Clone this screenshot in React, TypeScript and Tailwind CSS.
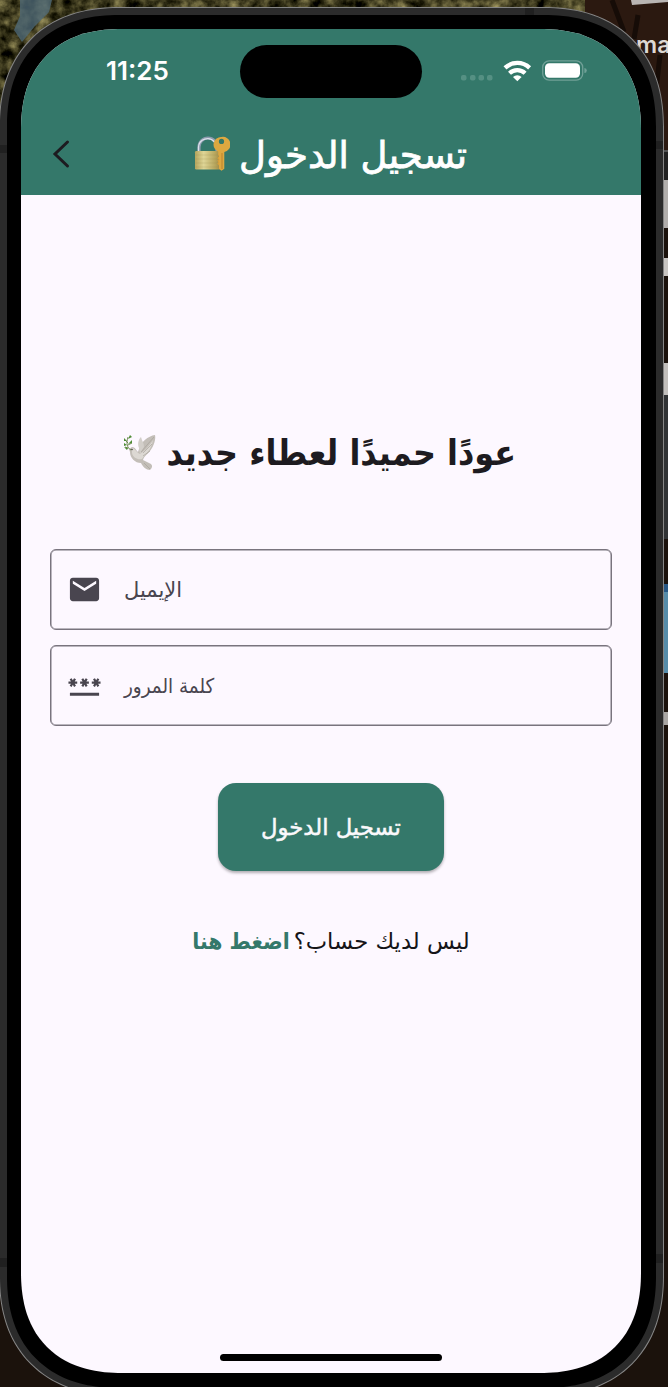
import React from "react";

function LockKeyIcon() {
  return (
    <svg width="36" height="36" viewBox="0 0 36 36" className="block shrink-0">
      <defs>
        <linearGradient id="lock-body" x1="0" x2="1" y1="0" y2="0">
          <stop offset="0" stopColor="#b5a55d" />
          <stop offset="0.3" stopColor="#ded596" />
          <stop offset="0.7" stopColor="#b6a55c" />
          <stop offset="1" stopColor="#91763a" />
        </linearGradient>
      </defs>
      <path d="M5 17V11a9 9 0 0 1 18 0v6" fill="none" stroke="#8c9aad" strokeWidth="3.2" />
      <path d="M4.5 16V11a9 9 0 0 1 16-5" fill="none" stroke="#dce1eb" strokeWidth="1.3" />
      <rect x="1" y="15" width="29" height="18.5" rx="1.2" fill="url(#lock-body)" />
      <path d="M1.5 19h28M1.5 23h28M1.5 27h28M1.5 31h28" stroke="#8f8048" strokeWidth="0.5" opacity="0.4" />
      <path
        fillRule="evenodd"
        d="M27.5 1a7.6 7.6 0 0 0-3.3 14.6V19l.8 1v12.8l2.5 2 2.8-2V16A7.6 7.6 0 0 0 27.5 1Zm0 1.8a2.6 2.6 0 1 1 0 5.2 2.6 2.6 0 0 1 0-5.2Z"
        fill="#dda840"
      />
      <path d="M28 17v16" stroke="#b3782a" strokeWidth="0.8" />
      <path d="M25 21l-1.2 1 1.2 1.4-1.2 1.4 1.2 1.3-1.2 1.4 1.2 1.4" fill="#d9a03b" stroke="#d9a03b" />
    </svg>
  );
}

function DoveIcon() {
  return (
    <svg width="36" height="38" viewBox="0 0 36 38" className="block shrink-0">
      <path d="M16 15C18 8 25 2 32 1c1 4-1 11-5 16-3 4-6 5-7 9l8 4c2 2 1 4-1 6-4 0-7-3-9-7-6 0-11-5-11-11l-1-3 3-2c3 0 4 3 6 5Z" fill="#c3beb8" />
      <path d="M16 14C14 9 16 5 18 3c1 4 3 6 3 10l-4 7Z" fill="#d3cfca" />
      <path d="M9 14c3 0 5 5 8 6 3-2 9-7 13-14-2 11-7 13-11 19-4 1-9-1-10-6Z" fill="#dcd8d3" />
      <path d="M18 18L31 3M20 19l9-9M20 22l7-5M21 29l6 6" stroke="#a39d96" strokeWidth="0.6" />
      <path d="M8 16C4 14 3 9 5 3M5 9L2 6M5 11l4-2M5 14l-3-1" fill="none" stroke="#668145" strokeWidth="0.9" />
      <path d="M5 5L7 1 9 3ZM4 7L1 4v3ZM5 10l4-4v3ZM4 11L1 9v3ZM5 14l-4-1 3 3Z" fill="#4e8c35" />
      <circle cx="9" cy="15.5" r="0.7" fill="#28231f" />
    </svg>
  );
}

function StatusIcons() {
  return (
    <svg width="128" height="22" viewBox="460 60 128 22" className="block">
      <g fill="#559083">
        <rect x="461" y="75" width="5.5" height="5.5" rx="2" />
        <rect x="470" y="75" width="5.5" height="5.5" rx="2" />
        <rect x="478.5" y="75" width="5.5" height="5.5" rx="2" />
        <rect x="487" y="75" width="5.5" height="5.5" rx="2" />
      </g>
      <g fill="none" stroke="#fff" strokeWidth="4.300">
        <path d="M505 67.9a17.8 17.8 0 0 1 24.6 0" />
        <path d="M509.5 73.3a11.3 11.3 0 0 1 15.6 0" />
      </g>
      <path d="M513 76.900a6.200 6.200 0 0 1 8.600 0l-4.300 4.300Z" fill="#fff" />
      <rect x="542.7" y="60.8" width="40" height="19.4" rx="6.5" fill="none" stroke="#70a097" strokeWidth="1.3" />
      <rect x="545" y="63.2" width="35" height="14.6" rx="4.2" fill="#fff" />
      <path d="M584.4 68q2.4 0 2.4 2.5t-2.4 2.5Z" fill="#70a097" />
    </svg>
  );
}

function MailIcon() {
  return (
    <svg width="35" height="35" viewBox="0 0 24 24" className="block shrink-0" fill="#49454f">
      <path d="M20 4H4c-1.1 0-2 .9-2 2v12c0 1.1.9 2 2 2h16c1.1 0 2-.9 2-2V6c0-1.1-.9-2-2-2Zm0 4-8 5-8-5V6l8 5 8-5Z" />
    </svg>
  );
}

function PasswordIcon() {
  return (
    <svg width="35" height="35" viewBox="0 0 24 24" className="block shrink-0" fill="#49454f">
      <path d="M2 17h20v2H2v-2Zm1.15-4.05L4 11.47l.85 1.48 1.3-.75-.85-1.48H7v-1.5H5.3l.85-1.47L4.85 7 4 8.47 3.15 7l-1.3.75.85 1.47H1v1.5h1.7l-.85 1.48 1.3.75Zm6.7-.75 1.3.75.85-1.48.85 1.48 1.3-.75-.85-1.48H15v-1.5h-1.7l.85-1.47-1.3-.75L12 8.47 11.15 7l-1.3.75.85 1.47H9v1.5h1.7l-.85 1.48ZM23 9.22h-1.7l.85-1.47-1.3-.75L20 8.47 19.15 7l-1.3.75.85 1.47H17v1.5h1.7l-.85 1.48 1.3.75.85-1.48.85 1.48 1.3-.75-.85-1.48H23v-1.5Z" />
    </svg>
  );
}

function Field({ icon, label, size }: { icon: React.ReactNode; label: string; size: string }) {
  return (
    <div className="flex h-[81px] items-center rounded-[6px] border border-[#79747e] pl-[16px] shadow-[inset_0_0_0_0.5px_#79747e]">
      {icon}
      <span dir="rtl" className={`ml-[22px] pt-[2px] whitespace-nowrap leading-none text-[#49454f] ${size}`}>{label}</span>
    </div>
  );
}

function Desktop() {
  return (
    <div className="absolute inset-0 flex justify-between bg-[#1b120c]">
      <svg width="668" height="150" className="absolute top-0 left-0" viewBox="0 0 668 150">
        <defs>
          <filter id="bark" x="0" y="0" width="1" height="1" colorInterpolationFilters="sRGB">
            <feTurbulence type="fractalNoise" baseFrequency="0.08" numOctaves="4" seed="4" />
            <feColorMatrix values="0.9 0 0 0 -0.19 0.85 0 0 0 -0.18 0.6 0 0 0 -0.17 0 0 0 0 1" />
          </filter>
        </defs>
        <rect width="585" height="150" filter="url(#bark)" />
        <path d="M20 0h32l-3 12-14 14-13 16-8-12 6-14Z" fill="#4e6876" opacity="0.8" />
        <path d="M585 0h83v150h-83Z" fill="#2b1910" />
        <path d="M612 0l12 32M638 15l-4 24M660 55l-5 44" stroke="#160c07" strokeWidth="5" />
        <path d="M631 0h37v2l-36 3Z" fill="#b9b5b3" />
      </svg>
      <div className="mt-[145px] h-[1130px] w-[8px] bg-[#2b2b2b]" />
      <div className="mt-[122px] flex h-[1265px] w-[5px] flex-col">
        <div className="h-[30px] bg-[#545454]" />
        <div className="h-[28px] bg-[#222]" />
        <div className="h-[48px] bg-[#b1aeac]" />
        <div className="mt-[30px] h-[18px] bg-[#c8c5c2]" />
        <div className="mt-[87px] h-[32px] bg-[#c2bfbc]" />
        <div className="h-[144px] bg-[#303234]" />
        <div className="mt-[45px] h-[8px] bg-[#275784]" />
        <div className="h-[81px] bg-[#568ca9]" />
        <div className="mt-[39px] h-[13px] bg-[#aaa7a4]" />
      </div>
      <span className="absolute top-[31px] left-[636px] font-['Inter'] text-[23.5px] leading-[28px] font-semibold text-[#ddd8d3]">ma</span>
    </div>
  );
}

export default function App() {
  return (
    <div className="relative h-[1387px] w-[668px] overflow-hidden bg-[#1b120c] font-['DejaVu_Sans',sans-serif]">
      <Desktop />
      <div className="relative mt-[7px] ml-[-1px] h-[1389px] w-[665px] rounded-[120px] border border-[#858585] bg-[#2b2b2b] p-[7px] [corner-shape:superellipse(1.18)]">
        <i className="absolute top-[137px] left-0 h-[8px] w-[7px] bg-[#202020]" />
        <i className="absolute top-[1250px] left-0 h-[9px] w-[7px] bg-[#202020]" />
        <i className="absolute top-[133px] right-0 h-[8px] w-[7px] bg-[#202020]" />
        <i className="absolute top-[1246px] right-0 h-[9px] w-[7px] bg-[#202020]" />
        <i className="absolute top-0 left-[525px] h-[7px] w-[9px] bg-[#202020]" />
        <div className="h-full rounded-[112px] bg-black p-[14px] [corner-shape:superellipse(1.2)]">
          <div className="relative flex h-[1344px] w-[620px] flex-col overflow-hidden rounded-[101px] bg-[#fdf8ff] [corner-shape:superellipse(1.22)]">
            <header className="h-[166px] shrink-0 bg-[#34786a] text-white">
              <div className="flex h-[84px] items-center pl-[85px]">
                <time className="w-[70px] font-['Inter'] text-[26px] leading-none font-semibold">11:25</time>
                <div className="mt-px ml-[64px] h-[53px] w-[182px] rounded-full bg-black" />
                <div className="ml-[38px]"><StatusIcons /></div>
              </div>
              <div className="flex h-[82px] items-center">
                <svg width="20" height="30" viewBox="0 0 20 30" className="ml-[30px] block"><path d="M16.5 3L4 15l12.5 12" fill="none" stroke="#1d1b20" strokeWidth="3" strokeLinecap="round" strokeLinejoin="miter" /></svg>
                <div className="ml-[123px] flex items-center gap-[7px]">
                  <LockKeyIcon />
                  <h1 dir="rtl" className="w-[230px] pt-[2px] text-[37px] leading-none font-normal whitespace-nowrap [-webkit-text-stroke:0.8px_white]">تسجيل الدخول</h1>
                </div>
              </div>
            </header>
            <main className="flex flex-col items-center pt-[237px]">
              <div className="ml-[102px] flex h-[42px] w-[393px] items-center justify-between self-start">
                <DoveIcon />
                <h2 dir="rtl" className="font-['DejaVu_Sans_Condensed','DejaVu_Sans',sans-serif] text-[35.4px] leading-none font-bold whitespace-nowrap text-[#1d1b20]">عودًا حميدًا لعطاء جديد</h2>
              </div>
              <form className="mt-[75px] flex w-[562px] flex-col gap-[15px]">
                <Field icon={<MailIcon />} label="الإيميل" size="text-[21px]" />
                <Field icon={<PasswordIcon />} label="كلمة المرور" size="font-['DejaVu_Sans_Condensed','DejaVu_Sans',sans-serif] text-[20.4px]" />
              </form>
              <button className="mt-[57px] h-[88px] w-[226px] rounded-[18px] bg-[#34786a] pt-px text-[22.7px] font-normal text-[#faf8fb] shadow-[0_2px_3px_rgba(0,0,0,0.3)] [-webkit-text-stroke:0.5px_#faf8fb]">تسجيل الدخول</button>
              <p dir="rtl" className="mt-[55px] text-[22.7px] leading-[30px] whitespace-nowrap text-[#151417]">ليس لديك حساب؟<span className="mr-[4px] font-['DejaVu_Sans_Condensed','DejaVu_Sans',sans-serif] font-bold text-[#34786a]">اضغط هنا</span></p>
            </main>
            <div className="mt-auto mb-[12px] h-[7px] w-[222px] self-center rounded-full bg-black" />
          </div>
        </div>
      </div>
    </div>
  );
}
